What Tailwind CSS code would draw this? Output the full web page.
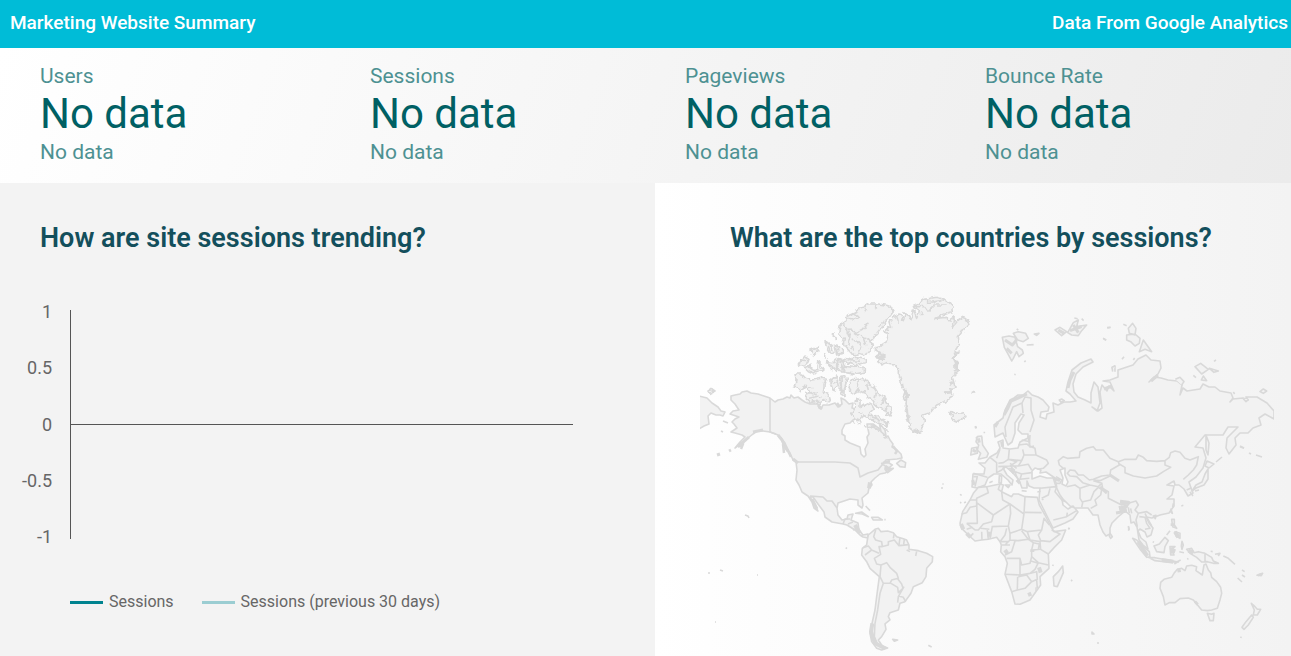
<!DOCTYPE html>
<html lang="en">
<head>
  <meta charset="UTF-8" />
  <meta name="viewport" content="width=device-width, initial-scale=1" />
  <title>Marketing Website Summary</title>
  <script src="https://cdn.jsdelivr.net/npm/@tailwindcss/browser@4"></script>
</head>
<body class="flex min-h-screen flex-col bg-[#f3f3f3] font-[Roboto,sans-serif]">

  <header class="flex h-12 items-center justify-between bg-[#00bcd7] pr-[3px] pb-[2px] pl-[10px] text-[19px] font-medium text-white">
    <h1>Marketing Website Summary</h1>
    <p>Data From Google Analytics</p>
  </header>

  <section class="grid grid-cols-[330fr_315fr_300fr_306fr] bg-[linear-gradient(110deg,#fff,#ebebeb)] pt-[14px] pb-[17px] pl-10 text-[21px] leading-7 text-[#4d9192]">
    <div>
      <h2>Users</h2>
      <p class="text-[42px] leading-[48px] text-[#006064]">No data</p>
      <p>No data</p>
    </div>
    <div>
      <h2>Sessions</h2>
      <p class="text-[42px] leading-[48px] text-[#006064]">No data</p>
      <p>No data</p>
    </div>
    <div>
      <h2>Pageviews</h2>
      <p class="text-[42px] leading-[48px] text-[#006064]">No data</p>
      <p>No data</p>
    </div>
    <div>
      <h2>Bounce Rate</h2>
      <p class="text-[42px] leading-[48px] text-[#006064]">No data</p>
      <p>No data</p>
    </div>
  </section>

  <main class="grid flex-1 grid-cols-[655fr_636fr]">
    <section class="pt-9 pr-[82px]">
      <h2 class="pl-10 text-[27px] leading-[38px] font-semibold text-[#134f5c]">How are site sessions trending?</h2>

      <div class="mt-[46px] flex h-[243px] gap-[18px] text-[18px] leading-[18px] text-[#666]">
        <div class="flex w-[52px] flex-col justify-between text-right">
          <span>1</span>
          <span>0.5</span>
          <span>0</span>
          <span>-0.5</span>
          <span>-1</span>
        </div>
        <div class="my-[7px] flex flex-1 items-center border-l border-[#555]">
          <div class="h-px w-full bg-[#555]"></div>
        </div>
      </div>

      <div class="mt-[44px] flex gap-[28px] pl-[70px] text-[16px] leading-6 text-[#666]">
        <div class="flex items-center gap-[6px]"><span class="h-[3px] w-[33px] bg-[#00838f]"></span>Sessions</div>
        <div class="flex items-center gap-[6px]"><span class="h-[3px] w-[33px] bg-[#9bcdd2]"></span>Sessions (previous 30 days)</div>
      </div>
    </section>

    <section class="bg-linear-to-r from-white to-[#f3f3f3] pt-9 pr-[17px] pl-[45px]">
      <h2 class="pl-[30px] text-[27px] leading-[38px] font-semibold text-[#134f5c]">What are the top countries by sessions?</h2>

      <svg class="mt-[33px] w-full [&_path]:[vector-effect:non-scaling-stroke]" viewBox="700 290 574 366" fill="#f2f2f2" stroke="#d9d9d9" stroke-width="1.6" stroke-linejoin="round" role="img" aria-label="World map">
        <!-- roughens the fjord coasts -->
        <filter id="coast" x="-5%" y="-5%" width="110%" height="110%">
          <feTurbulence type="fractalNoise" baseFrequency="0.07" numOctaves="2" seed="4" />
          <feDisplacementMap in="SourceGraphic" scale="16" xChannelSelector="R" yChannelSelector="G" />
        </filter>
        <!-- Chukotka, Wrangel -->
        <path d="M699 396 707 398 712 403 718 407 721 411 725 412 723 416 720 415 716 415 711 413 708 416 709 424 704 426 699 429ZM708 391 712 389 715 391 710 393ZM723 421 728 423M721 431 723 432" />
        <!-- Alaska, Canada, USA, Central America -->
        <path d="M731 396 735 395 740 394 742 392 747 391 751 393 758 394 764 396 770 398 775 402 778 400 783 399 787 397 790 398 791 395 794 398 798 397 802 400 805 402 810 404 818 404 819 408 821 409 823 405 829 405 835 403 838 407 842 404 841 398 845 400 849 404 853 403 852 408 856 409 854 414 857 418 853 420 850 423 845 424 842 430 842 434 845 436 845 440 850 443 855 445 860 447 861 454 864 457 866 455 865 449 868 443 867 437 869 434 868 429 867 424 873 424 877 427 881 430 883 436 885 438 888 436 890 440 893 444 892 447 897 450 901 454 902 458 897 459 886 460 882 465 888 462 890 464 886 467 890 470 885 473 880 474 875 478 871 482 872 485 869 488 868 493 862 498 863 505 862 508 858 505 858 500 850 499 844 501 838 503 837 508 838 515 842 520 847 519 848 515 853 514 851 520 858 523 859 530 863 535 868 534 868 538 863 537 860 535 855 530 847 525 843 524 832 522 825 517 824 512 818 504 813 497 810 497 813 502 816 507 818 511 814 508 812 502 808 496 802 492 799 485 796 480 797 470 796 462 793 460 790 453 788 450 785 443 781 438 778 435 770 432 763 431 757 431 753 434 748 438 744 441 735 448 740 442 745 437 742 435 735 433 731 432 737 428 734 424 732 422 735 419 739 417 730 414 733 411 739 410 735 404 731 400Z" />
        <path fill="none" d="M770 398V432L776 434M797 462H835L850 463 858 468 860 477 868 473 878 470 882 465M810 496 823 497 827 501 832 501 837 508M843 524 845 519 850 519M848 524 853 522M853 530 858 528" />
        <path stroke-width="3" fill="none" d="M778 435 782 440 785 447 788 451M793 459 798 463M753 432 763 430M739 446 749 437M729 451 731 450M717 455 720 454M812 499 817 509" />
        <path stroke-width="2.5" fill="none" d="M783 444 784 453M786 447 791 457M738 447 743 444 741 449M818 405 822 409M837 403 840 407M893 446 897 451 895 454M883 463 890 461" />
        <g transform="translate(695 290) scale(.3333)" filter="url(#coast)">
          <path d="M300 252 320 252 332 265 350 270 365 268 378 265 392 268 388 280 385 310 398 312 408 325 400 335 380 330 375 345 360 340 345 335 330 320 340 305 330 285 320 305 312 295 298 290 303 270ZM310 225 320 210 330 198 342 205 340 215 325 230ZM330 235 345 225 348 238 365 238 368 215 375 212 375 230 390 240 370 245 355 252 340 245ZM345 180 370 170 368 185 355 198 350 188ZM390 152 410 168 417 188 405 192 395 175ZM420 165 430 170 442 190 425 195ZM394 215 412 218 425 208 425 242 410 238ZM432 205 445 210 446 248 430 235ZM405 275 425 258 430 290 415 302ZM437 260 450 258 450 320 435 310ZM415 132 422 148ZM388 192 394 204ZM40 305 48 298 58 304 46 310Z" />
          <path fill="none" d="M335 310 350 308 365 315M345 325 365 320 380 318M340 295 352 290M350 332 372 335 395 325M400 168 406 185M340 228 358 245 385 243M400 222 418 235M412 280 426 275M318 210 335 212" />
        </g>
        <!-- Arctic islands, Greenland, Iceland -->
        <g transform="translate(835 290) scale(.3333)" filter="url(#coast)">
          <path d="M165 48 175 65 160 85 148 100 140 115 125 135 108 152 112 170 100 190 85 195 70 190 60 195 50 190 35 175 25 160 28 145 12 130 15 105 28 95 38 78 60 68 70 55 90 50 100 42 130 42 150 45ZM5 165 18 175 25 190 10 192ZM8 205 40 210 60 202 90 208 92 218 60 225 35 218ZM25 228 50 232 60 228 88 232 88 246 60 252 30 248ZM8 210 20 215 22 245 8 240Z" />
          <path fill="none" d="M25 100 45 120 65 128 85 118 100 98M35 115 45 140 38 165M60 130 75 140 108 150M40 85 58 88 75 82M60 70 72 78M90 52 96 66M120 44 125 56M50 150 70 155 80 170 70 185M85 145 92 165M45 170 60 178M130 110 145 95M45 212 75 214" />
          <path d="M45 280 60 265 78 264 85 270 98 272 105 285 118 292 130 310 145 318 150 330 160 345 172 360 165 378 152 368 148 360 130 352 118 342 110 330 95 320 85 305 70 298 60 312 48 305 42 295ZM65 325 75 330 75 350 90 340 110 345 118 358 100 375 130 378 145 392 158 400 155 412 130 400 115 390 100 385 85 378 75 390 60 385 50 370 62 352ZM18 262 38 262 30 290 20 310ZM95 415 110 408 130 420 145 425 155 445M145 418 158 425" />
          <path fill="none" d="M70 270 66 292M95 280 100 300M125 305 120 325M145 325 138 345M160 350 150 358M70 365 82 370M110 380 135 390M85 405 90 412M70 398 75 402M55 395 60 400" />
          <path d="M118 178 155 155 160 130 148 125 162 110 170 112 165 95 175 80 195 72 205 92 210 68 228 90 235 60 245 85 250 60 235 50 250 40 270 28 305 22 335 30 350 45 352 65 330 72 300 85 335 82 340 92 358 80 350 115 370 90 380 82 390 85 403 95 385 120 370 140 372 160 360 180 372 188 355 205 368 215 356 228 373 242 352 262 360 290 345 300 355 318 330 335 305 345 285 368 265 375 268 390 258 425 245 430 222 412 225 400 215 380 220 370 208 360 215 340 205 320 210 305 200 290 198 270 190 250 190 235 175 222 155 218 140 225 128 215 148 205 122 200 140 190Z" />
          <path fill="none" d="M235 50 270 50 280 65 300 45 335 45M270 28 280 38 320 32M255 65 265 75M220 72 225 90M185 78 190 95M355 85 362 100M372 125 385 118" />
          <path fill="none" stroke-width="3" d="M210 300 218 320 212 340 218 365 222 395M362 185 358 205 366 222 360 245M342 275 354 282M330 308 350 306M128 190 145 198 132 210M235 418 252 424" />
          <path d="M342 368 355 378 348 387 370 395 393 380 385 365 370 370 358 368 346 364ZM412 307 418 305M422 408V415" />
        </g>
        <!-- Caribbean, South America -->
        <g transform="translate(835 420) scale(.3333)">
          <path d="M185 130 198 120 212 128 210 142 195 140ZM140 130 160 128 172 135 160 145ZM150 148 175 145 158 158ZM62 280 80 276 100 290 82 282ZM110 292 130 292 142 300 115 300ZM92 258 105 272M148 299H152M32 383 36 386M322 192H326M280 676 290 681M173 658 188 660 178 664ZM133 10 150 30 153 48 138 35Z" />
          <path d="M100 345 120 328 130 325 138 335 158 333 175 338 185 350 205 356 215 360 222 375 222 388 250 392 275 400 293 410 292 425 275 445 273 470 262 488 235 500 228 520 210 545 195 550 190 570 165 578 160 590 165 600 150 612 153 628 140 650 130 660 142 678 158 684 140 690 125 685 110 665 105 640 110 615 120 570 125 530 133 470 105 445 95 425 80 405 82 385 95 375 97 360Z" />
          <path fill="none" d="M122 330 116 350 122 360 140 365 142 380 132 380 137 403 118 415 125 432 138 435 155 428 165 442 185 460 190 475 170 480 165 490 145 490 135 470 138 435M140 380 160 375 160 365 178 360 192 377 222 374M195 352 192 375M208 358 206 373M178 340 175 355M84 383 100 378 110 390 90 405M110 390 132 400M145 490 135 520 128 570 120 610 118 650 130 678M188 476 200 492 204 505 190 518 188 502 168 490M207 500 190 530 188 548M190 528 205 532 212 545M215 390 225 395M245 394 242 408" />
          <path fill="none" stroke-width="4" d="M112 610 108 635 120 670 150 685M105 187 102 205M150 140 165 150M60 315 75 340" />
        </g>
        <!-- Svalbard, Franz Josef Land, Novaya Zemlya -->
        <g transform="translate(935 290) scale(.3333)">
          <path d="M202 142 222 138 240 142 248 170 262 180 265 190 252 200 245 185 235 205 230 213 218 190 208 172ZM235 130 250 125 272 130 280 145 265 155 248 150ZM298 132 312 130 305 136ZM275 165 296 164M268 216 272 212M238 253 242 254M110 308 118 304M245 117 250 120M360 120 375 112 395 125 380 137ZM398 128 415 98 430 90 425 110 455 105 440 122 430 137 410 135ZM418 84 428 86M440 86 446 92M516 113 526 112M504 145 514 150M373 330 380 327 388 332 378 337ZM121 408 123 415M122 445 130 440 142 445M530 235 540 228V245" />
          <path fill="none" stroke-width="3" d="M210 150 232 165 245 150M215 175 230 190M370 120 388 130M405 122 440 110M415 105 430 128" />
        </g>
        <!-- Eurasia -->
        <path d="M995 437 994 425 1003 418 1005 410 1010 400 1014 398 1018 395 1023 395 1028 391 1032 395 1038 397 1043 400 1049 407 1048 411 1041 412 1040 417 1046 419 1047 414 1054 412 1053 403 1058 405 1064 402 1070 402 1076 401 1070 394 1066 391 1068 382 1072 370 1081 363 1091 359 1093 362 1083 367 1076 374 1073 384 1074 392 1078 397 1085 400 1091 403 1091 393 1094 382 1098 387 1100 403 1097 411 1092 407 1098 411 1102 408 1100 392 1102 385 1107 391 1109 386 1114 391 1110 382 1103 381 1110 380 1118 377 1118 370 1127 367 1133 365 1138 359 1146 355 1151 360 1160 361 1161 368 1158 374 1149 382 1154 377 1161 378 1168 380 1177 381 1182 385 1180 395 1183 388 1187 391 1200 389 1203 384 1209 387 1215 387 1220 391 1231 393 1233 398 1230 402 1233 399 1243 398 1248 400 1246 397 1257 397 1267 403 1274 411 1274 419 1265 414 1259 418 1261 425 1253 428 1248 433 1240 433 1235 438 1236 445 1229 454 1226 448 1227 438 1238 427 1228 427 1223 435 1205 435 1195 447 1203 448 1206 458 1203 468 1196 477 1189 482 1191 488 1193 493 1188 496 1184 489 1179 485 1175 485 1174 481 1167 485 1174 486 1172 495 1167 499 1174 499 1174 506 1169 513 1160 515 1152 518 1146 517 1149 523 1153 528 1151 535 1147 537 1145 532 1140 529 1138 531 1141 538 1146 542 1148 549 1143 545 1139 540 1137 527 1134 522 1131 523 1130 515 1125 511 1118 517 1112 523 1110 528 1110 534 1106 536 1103 532 1100 525 1098 515 1093 515 1088 508 1075 508 1070 506 1066 502 1062 499 1063 505 1068 509 1073 506 1078 512 1073 519 1065 523 1053 528 1048 518 1043 508 1039 500 1040 488 1034 488 1029 486 1027 481 1027 488 1022 488 1019 480 1013 473 1006 467 1003 468 1007 475 1013 480 1012 485 1008 480 1001 474 994 474 988 478 985 485 977 488 972 487 973 474 984 474 985 468 979 463 985 463 990 457 997 453 1000 448 998 442 1003 440 1003 448 1010 449 1018 448 1020 442 1028 438 1028 434 1022 434 1018 430 1019 423 1024 415 1021 414 1015 423 1015 433 1012 442 1008 445 1005 438 1003 433Z" />
        <path fill="none" stroke-width="3" d="M1004 415 1008 408 1011 401 1018 398 1027 394M1068 388 1070 380 1074 372M995 427 998 422M1116 513 1127 511M1119 508 1128 506M1110 475 1119 481M1100 487 1107 493M1151 381 1158 375M1104 389 1112 386" />
        <path fill="none" d="M1006 437 1005 427 1013 407 1022 403 1025 397 1031 398 1031 410 1034 420 1030 432M1022 403 1023 413M1028 436 1030 447 1034 446" />
        <!-- Black Sea, Caspian, Persian Gulf -->
        <path fill="#fafafa" d="M1032 471 1035 468 1041 470 1040 473 1046 472 1055 478 1047 478 1040 476 1032 479ZM1060 470 1065 468 1065 475 1068 482 1066 486 1062 484 1063 478Z" />
        <g transform="translate(950 420) scale(.3333)">
          <path d="M82 50 95 48 98 75 115 100 110 112 85 118 92 100 82 90 86 75 78 65ZM65 85 80 82 82 100 62 105ZM165 195 180 195 175 203ZM148 167 155 168 154 190 147 188ZM215 212 230 214M262 216 272 214M77 18V25M103 35V40M118 188 128 184M30 223 35 226M30 247 34 249M42 248 48 246" />
          <path fill="none" d="M70 170 82 170 75 200M70 160 112 172M120 112 140 128 140 158 155 150 165 142M150 88 140 115M178 88 175 118 160 128 145 130M145 140 180 138 200 125 175 118 215 122 222 105 218 88M205 75 230 72 240 80M215 60 240 65M240 45 238 78 255 85 258 105 222 105M258 105 290 120 295 130 280 145 262 148M215 122 205 138 182 138 195 155 215 162 245 158M205 138 235 133 245 150M215 162 210 178 238 175M195 155 200 170 208 185M175 145 195 150M180 130 200 145M310 175 318 200 270 205M318 170 335 180 330 190 318 190M318 200 330 225 345 245M275 235 295 225 300 205M275 235 280 240" />
          <path fill="none" stroke-width="3" d="M85 55 88 68M155 65 158 80M68 90 78 95M200 180 210 190M182 148 192 160M310 175 330 182M68 180 72 195" />
        </g>
        <g transform="translate(1050 420) scale(.3333)">
          <path fill="none" d="M40 145 28 135 25 122 40 110 52 115 88 112 90 95 110 85 130 80 138 90 160 90 180 115 205 125 208 135 182 150 180 165 155 168 130 178 118 180 100 165 85 165 75 152 60 150 52 160 60 168 80 170 98 188 120 195M205 125 225 118 258 118 265 105 280 112 290 122 320 124 345 122 345 135 362 142 340 155 320 168 285 174 250 168 225 158 225 142 208 132M345 122 358 112 362 98 375 93 390 97 405 115 420 120 445 110 440 135 430 150 415 165 400 178M50 200 75 195 90 205 90 235 98 248 95 262M90 205 120 195 145 200 155 190 130 182M145 202 132 215 122 240 98 245M122 265 140 255 135 240 152 225 155 208 145 202M155 188 158 205 175 215 175 235 215 255 240 248 258 243 265 255 255 270 265 280 290 275 305 285M130 180 150 182 180 168M208 258 212 278M235 262 238 280M242 265 245 280M265 280 258 300 262 320M268 290 285 292 290 310 300 325 285 328M285 280 295 300 305 318M15 175 20 200 15 215 40 245M10 300 50 290 80 272M50 290 52 278M410 210 425 203" />
          <path d="M180 340 187 350 182 355 178 348ZM310 288 318 286 316 296ZM235 318 238 330M55 325 60 326M370 250 368 262" />
        </g>
        <!-- Japan, Sakhalin, Kurils -->
        <path d="M1206 435 1209 443 1208 455 1206 450ZM1207 461 1214 464 1209 468 1205 466ZM1208 469 1208 479 1204 485 1196 488 1192 491 1196 485 1202 482 1205 474ZM1195 491 1199 490M1190 492 1193 496M1216 462 1222 457M1240 446 1244 448M1256 455 1262 457M1249 453 1251 454" />
        <!-- Siberian islands -->
        <g transform="translate(1100 300) scale(.3333)">
          <path d="M70 73 80 77M85 85 98 70 108 85 105 105 88 100ZM80 105 105 102 120 115 118 130 105 138 92 125 80 120ZM118 155 130 120 155 155 135 148ZM22 84 32 82M10 116 18 121M66 178 72 170M38 215 36 202 46 197M100 180 104 174M285 200 302 190 325 208 305 222ZM328 205 355 213 342 217ZM342 184 348 180M280 226 288 233M304 240 310 228 320 242ZM226 238 240 232 252 245 245 255M480 275 490 267 500 273 490 280ZM400 276 404 282M430 296 438 305 446 298M420 440 432 445" />
        </g>
        <!-- Africa -->
        <g transform="translate(950 480) scale(.3333)">
          <path d="M85 22 110 20 150 12 160 15 155 35 185 50 190 42 205 42 225 50 262 52 268 75 285 105 300 135 312 155 347 150 335 180 315 200 295 222 297 265 270 290 272 315 240 360 210 373 195 372 185 335 165 283 172 250 165 230 152 215 154 195 150 185 140 172 115 178 95 180 75 183 55 165 35 145 30 130 38 95 60 60 70 40ZM338 258 340 278 322 320 312 318 310 290 325 275ZM307 255 311 257M363 300 367 303M354 145 358 147" />
          <path fill="none" d="M110 20 115 38 80 55 80 78 60 82 50 98 35 102M60 60 80 60M80 65 82 130 50 130M80 68 130 105 180 72 158 60 155 35 145 28 150 12M130 105 125 125 100 132 85 150 75 150 50 130M180 72 222 102 225 50M225 97 275 98M180 72 182 100 175 138 180 160 215 148 222 100M125 140 175 138M120 175 127 140M170 145 165 165 150 185M215 148 232 155 275 150 282 115 298 135M275 150 265 165 272 182 300 185 330 162 305 150M180 180 180 160M215 152 235 178 205 182 180 180 165 195M165 225 185 215 195 183M235 178 250 188 245 210 245 230 240 250 215 255 210 235 170 235M232 155 240 180 270 185 272 208 295 222M250 210 270 208M245 230 265 248 295 255M165 283 210 285 210 235M210 285 240 280 255 268 265 248M240 242 265 250M203 290 202 330 185 335M203 330 225 325 245 305 230 285 205 290M230 283 260 275 262 298 245 305M260 300 262 325M155 195 180 195M50 148 68 142M60 170 70 160M95 155 96 180M112 150 115 178M92 145 118 148M150 185 175 185M250 188 268 192 265 208" />
          <path fill="none" stroke-width="4" d="M234 345 244 341M256 328H260M267 262 272 278M33 132 40 148M50 160 62 172M247 208V216M118 155V170M165 210 172 220" />
        </g>
        <!-- South-east Asia, Australia, New Zealand -->
        <g transform="translate(1120 500) scale(.3333)">
          <path d="M38 115 50 120 70 140 88 155 90 170 80 172 62 150ZM85 172 105 173 130 178 155 182 175 186 140 186 105 182ZM102 138 118 132 135 112 145 122 135 140 132 158 110 155ZM150 140 165 140 155 148 162 165 152 165ZM170 186 182 180M163 192 172 186M155 58 163 58 163 75 170 85 158 80ZM165 95 180 100 180 115 168 108ZM140 105 150 92M153 27 157 40 152 35ZM184 18 190 16M26 80V92M186 124 190 135 186 148 184 138ZM178 155 192 158M200 148 215 145 222 158 235 155 255 160 275 172 280 183 295 190 280 190 262 185 245 186 230 172 210 160ZM255 160V187M272 154 278 155M285 163 300 160 295 168M310 168 325 175 345 193M202 178 205 175M98 125 102 127" />
          <path d="M122 247 132 238 155 232 162 220 172 208 185 205 195 212 200 198 215 196 230 200 228 212 247 225 252 195 258 192 265 210 272 218 275 232 290 245 302 262 305 280 300 300 292 325 275 330 262 332 245 330 235 318 228 310 220 300 205 294 180 296 165 308 148 308 135 315 130 290 120 265ZM262 340 275 343 282 340 280 362 270 362ZM394 310 405 320 412 328 422 328 412 345 400 345 403 330ZM395 345 400 352 385 375 372 388 366 382 378 365ZM361 411 365 413M366 210 374 215M353 234 366 246M411 226 420 222 428 220 424 227Z" />
          <path fill="none" stroke-width="4" d="M55 125 82 168M125 180 160 185M158 70V78M165 95 175 112M155 142 158 160M205 152 220 158M0 5 25 8 15 20M0 30 20 28M226 312 232 306M172 212 182 210M155 150 166 154" />
        </g>
        <!-- Pacific islands -->
        <path d="M745 515 748 516 749 518M708 573H710M720 570 723 571M757 575H758M715 622H716M1092 632 1094 634 1092 634ZM1097 643H1099M1242 575 1245 577M1258 576 1260 574M941 488H943" />
      </svg>
    </section>
  </main>

</body>
</html>
